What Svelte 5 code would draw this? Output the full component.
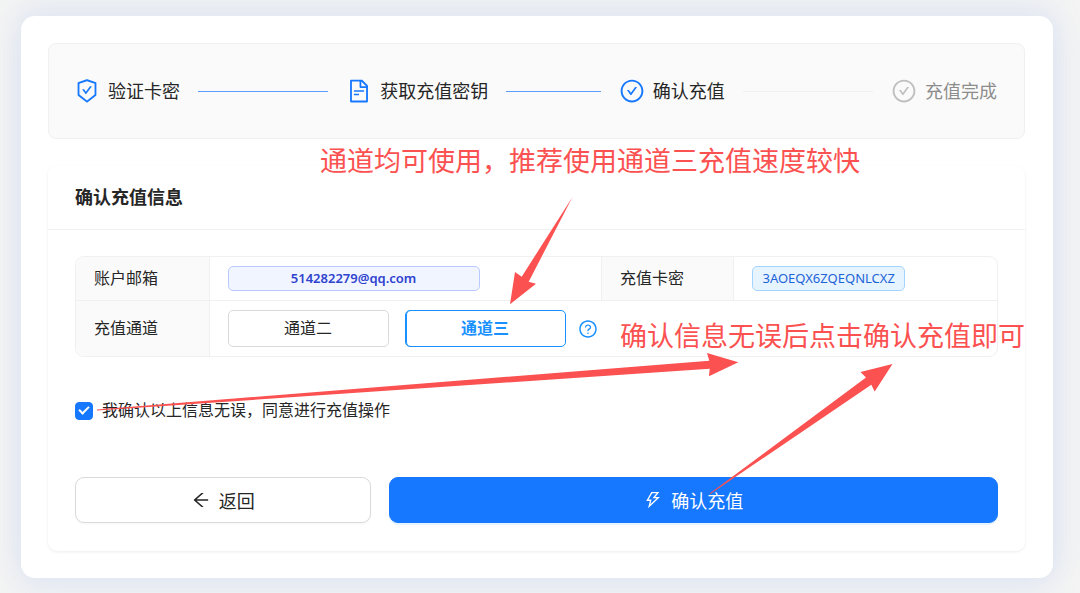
<script>
  // 步驟與圖示
  const icons = {
    shield: 'M866.9 169.9L527.1 54.1C523 52.7 517.5 52 512 52s-11 .7-15.1 2.1L157.1 169.9c-8.3 2.8-15.1 12.4-15.1 21.2v482.4c0 8.8 5.7 20.4 12.6 25.9L499.3 968c3.5 2.7 8 4.1 12.6 4.1s9.2-1.4 12.6-4.1l344.7-268.6c6.9-5.4 12.6-17 12.6-25.9V191.1c.2-8.8-6.6-18.3-14.9-21.2zM810 654.3L512 886.5 214 654.3V226.7l298-101.6 298 101.6v427.6zm-405.8-201c-3-4.1-7.8-6.6-13-6.6H336c-6.5 0-10.3 7.4-6.5 12.7l126.4 174a16.1 16.1 0 0026 0l212.6-292.7c3.8-5.3 0-12.7-6.5-12.7h-55.2c-5.1 0-10 2.5-13 6.6L468.9 542.4l-64.7-89.1z',
    file: 'M854.6 288.6L639.4 73.4c-6-6-14.1-9.4-22.6-9.4H192c-17.7 0-32 14.3-32 32v832c0 17.7 14.3 32 32 32h640c17.7 0 32-14.3 32-32V311.3c0-8.5-3.4-16.7-9.4-22.7zM790.2 326H602V137.8L790.2 326zm1.8 562H232V136h302v216a42 42 0 0042 42h216v494zM504 618H320c-4.4 0-8 3.6-8 8v48c0 4.4 3.6 8 8 8h184c4.4 0 8-3.6 8-8v-48c0-4.4-3.6-8-8-8zM312 490v48c0 4.4 3.6 8 8 8h384c4.4 0 8-3.6 8-8v-48c0-4.4-3.6-8-8-8H320c-4.4 0-8 3.6-8 8z',
    check: 'M699 353h-46.9c-10.2 0-19.9 4.9-25.9 13.3L469 584.3l-71.2-98.8c-6-8.3-15.6-13.3-25.9-13.3H325c-6.5 0-10.3 7.4-6.5 12.7l124.6 172.8a31.8 31.8 0 0051.7 0l210.6-292c3.9-5.3.1-12.7-6.4-12.7zM512 64C264.6 64 64 264.6 64 512s200.6 448 448 448 448-200.6 448-448S759.4 64 512 64zm0 820c-205.4 0-372-166.6-372-372s166.6-372 372-372 372 166.6 372 372-166.6 372-372 372z',
    question: 'M512 64C264.6 64 64 264.6 64 512s200.6 448 448 448 448-200.6 448-448S759.4 64 512 64zm0 820c-205.4 0-372-166.6-372-372s166.6-372 372-372 372 166.6 372 372-166.6 372-372 372zM623.6 316.7C593.6 290.4 554 276 512 276s-81.6 14.5-111.6 40.7C369.2 344 352 380.7 352 420v7.6c0 4.4 3.6 8 8 8h48c4.4 0 8-3.6 8-8V420c0-44.1 43.1-80 96-80s96 35.9 96 80c0 31.1-22 59.6-56.1 72.7-21.2 8.1-39.2 22.3-52.1 40.9-13.1 19-19.9 41.8-19.9 64.9V620c0 4.4 3.6 8 8 8h48c4.4 0 8-3.6 8-8v-22.7a48.3 48.3 0 0130.9-44.8c59-22.7 97.1-74.7 97.1-132.5.1-39.3-17.1-76-48.3-103.3zM472 732a40 40 0 1080 0 40 40 0 10-80 0z',
    back: 'M872 474H286.9l350.2-304c5.6-4.9 2.2-14-5.2-14h-88.5c-3.9 0-7.6 1.4-10.5 3.9L155 487.8a31.96 31.96 0 000 48.3L535.1 866c1.5 1.3 3.3 2 5.2 2h91.5c7.4 0 10.8-9.2 5.2-14L286.9 550H872c4.4 0 8-3.6 8-8v-60c0-4.4-3.6-8-8-8z',
    bolt: 'M848 359.3H627.7L825.8 109c4.1-5.3.4-13-6.3-13H436c-2.8 0-5.5 1.5-6.9 4L170 547.5c-3.1 5.3.7 12 6.9 12h174.4l-89.4 357.6c-1.9 7.8 7.5 13.3 13.3 7.7L853.5 373c5.2-4.9 1.7-13.7-5.5-13.7zM378.2 732.5l60.3-241H281.1l189.6-327.4h224.6L487 427.4h211L378.2 732.5z'
  };

  const steps = [
    { title: '验证卡密', icon: 'shield' },
    { title: '获取充值密钥', icon: 'file' },
    { title: '确认充值', icon: 'check' },
    { title: '充值完成', icon: 'check' }
  ];
  const channels = ['通道二', '通道三'];

  let current = 2;
  let channel = '通道三';
  let agreed = true;
</script>

<div class="page">
  <main class="panel">
    <ol class="steps">
      {#each steps as step, i}
        <li class="step" class:waiting={i > current}>
          <svg class="step-icon" viewBox="0 0 1024 1024" aria-hidden="true"><path d={icons[step.icon]} /></svg>
          <span>{step.title}</span>
          {#if i < steps.length - 1}
            <i class="line" class:done={i < current}></i>
          {/if}
        </li>
      {/each}
    </ol>

    <section class="card">
      <h2>确认充值信息</h2>
      <div class="card-body">
        <table>
          <colgroup>
            <col class="col-label" />
            <col class="col-email" />
            <col class="col-label" />
            <col />
          </colgroup>
          <tbody>
            <tr>
              <th scope="row">账户邮箱</th>
              <td><span class="tag email">514282279@qq.com</span></td>
              <th scope="row">充值卡密</th>
              <td><span class="tag">3AOEQX6ZQEQNLCXZ</span></td>
            </tr>
            <tr>
              <th scope="row">充值通道</th>
              <td colspan="3">
                <div class="channels">
                  {#each channels as name}
                    <button
                      type="button"
                      class="channel"
                      class:active={channel === name}
                      aria-pressed={channel === name}
                      on:click={() => (channel = name)}
                    >{name}</button>
                  {/each}
                  <svg class="help" viewBox="0 0 1024 1024" aria-hidden="true"><path d={icons.question} /></svg>
                </div>
              </td>
            </tr>
          </tbody>
        </table>

        <label class="agree">
          <input type="checkbox" bind:checked={agreed} />
          我确认以上信息无误，同意进行充值操作
        </label>

        <div class="actions">
          <button type="button" class="btn">
            <svg viewBox="0 0 1024 1024" aria-hidden="true"><path d={icons.back} /></svg>
            返回
          </button>
          <button type="button" class="btn primary" disabled={!agreed}>
            <svg viewBox="0 0 1024 1024" aria-hidden="true"><path d={icons.bolt} /></svg>
            确认充值
          </button>
        </div>
      </div>
    </section>
  </main>

  <!-- 標註說明 -->
  <p class="note note-channel">通道均可使用，推荐使用通道三充值速度较快</p>
  <p class="note note-confirm">确认信息无误后点击确认充值即可</p>
  <svg class="arrows" width="1080" height="593" viewBox="0 0 1080 593" aria-hidden="true">
    <path d="M572.5 197L521.7 276.7 515 272 510 304.3 536 283.7 528.7 281.7z" />
    <path d="M97 409.5L709.3 360.7 707 353 738.3 362.3 709 376.2 709.7 368.7 97 410.5z" />
    <path d="M709.7 493.5L866 377.5 860.5 372 892.5 364 874.7 391.5 871.3 384.7 710.3 494z" />
  </svg>
</div>

<style>
  :global(body) {
    margin: 0;
    background: #f4f4f4;
  }
  .page {
    position: relative;
    overflow: hidden;
    padding: 16px 27px 16px 21px;
    font-family: "Noto Sans", "Noto Sans CJK SC", sans-serif;
    font-size: 16px;
    color: #262626;
  }
  .panel {
    padding: 27px 28px 27px 27px;
    border-radius: 14px;
    background: #fff;
    box-shadow:
      0 -10px 28px 4px rgba(120, 160, 240, 0.1),
      0 10px 28px 4px rgba(120, 160, 240, 0.1);
  }
  svg {
    display: block;
    flex: none;
    fill: currentColor;
  }

  .steps {
    display: flex;
    margin: 0 0 27px;
    padding: 34px 27px 34px 25px;
    border: 1px solid #f0f0f0;
    border-radius: 8px;
    background: #fafafa;
    list-style: none;
    font-size: 18px;
    line-height: 26px;
  }
  .step {
    display: flex;
    flex: 1;
    align-items: center;
    gap: 8px;
    white-space: nowrap;
  }
  .step:last-child {
    flex: none;
  }
  .line {
    flex: 1;
    height: 1px;
    margin: 0 18px 0 10px;
    background: #f0f0f0;
  }
  .line.done {
    background: #5c9fff;
  }
  .step-icon {
    width: 26px;
    height: 26px;
    color: #1677ff;
  }
  .waiting {
    color: #8c8c8c;
  }
  .waiting .step-icon {
    color: #bfbfbf;
  }

  .card {
    border-radius: 9px;
    box-shadow: 0 1px 3px rgba(0, 0, 0, 0.08);
  }
  h2 {
    margin: 0;
    padding: 18px 27px;
    border-bottom: 1px solid #f0f0f0;
    font-size: 18px;
    font-weight: 700;
    line-height: 27px;
  }
  .card-body {
    padding: 26px 27px 28px;
  }

  table {
    width: 100%;
    table-layout: fixed;
    border: 1px solid #f0f0f0;
    border-radius: 9px;
    border-spacing: 0;
    overflow: hidden;
  }
  .col-label {
    width: 14.5%;
  }
  .col-email {
    width: 42.5%;
  }
  th,
  td {
    box-sizing: border-box;
    padding: 9px 18px;
    line-height: 25px;
    text-align: left;
  }
  th {
    border-right: 1px solid #f0f0f0;
    background: #fafafa;
    font-weight: 400;
  }
  td + th {
    border-left: 1px solid #f0f0f0;
  }
  tr:first-child > * {
    border-bottom: 1px solid #f0f0f0;
  }
  .tag {
    display: block;
    box-sizing: border-box;
    width: fit-content;
    padding: 0 9px;
    border: 1px solid #a3d3ff;
    border-radius: 5px;
    background: #e6f4ff;
    color: #1d63d8;
    font-size: 13px;
    line-height: 23px;
  }
  .email {
    width: 252px;
    border-color: #b9c8ff;
    background: #f0f5ff;
    color: #2f43cf;
    font-weight: 600;
    text-align: center;
  }
  .channels {
    display: flex;
    align-items: center;
    gap: 16px;
  }
  .channel {
    box-sizing: border-box;
    width: 161px;
    height: 37px;
    padding: 0;
    border: 1px solid #d9d9d9;
    border-radius: 5px;
    background: #fff;
    color: inherit;
    font: inherit;
  }
  .channel.active {
    border-color: #1890ff;
    box-shadow: inset 1px 0 #1890ff;
    color: #1890ff;
    font-weight: 700;
  }
  .help {
    width: 20px;
    height: 20px;
    margin-left: -4px;
    color: #1890ff;
  }

  .agree {
    display: flex;
    align-items: center;
    gap: 9px;
    width: fit-content;
    margin: 41px 0 54px;
    line-height: 25px;
  }
  .agree input {
    display: grid;
    place-items: center;
    appearance: none;
    width: 18px;
    height: 18px;
    margin: 0;
    border: 1px solid #d9d9d9;
    border-radius: 4px;
  }
  .agree input:checked {
    border-color: #1677ff;
    background: #1677ff;
  }
  .agree input:checked::after {
    content: '';
    width: 4px;
    height: 8px;
    margin-bottom: 3px;
    border: solid #fff;
    border-width: 0 2px 2px 0;
    transform: rotate(45deg);
  }

  .actions {
    display: grid;
    grid-template-columns: 33fr 68fr;
    gap: 18px;
  }
  .btn {
    display: flex;
    align-items: center;
    justify-content: center;
    gap: 8px;
    height: 46px;
    border: 1px solid #d9d9d9;
    border-radius: 9px;
    background: #fff;
    box-shadow: 0 2px 0 rgba(0, 0, 0, 0.02);
    color: inherit;
    font-family: inherit;
    font-size: 18px;
  }
  .btn svg {
    width: 20px;
    height: 20px;
  }
  .primary {
    border-color: #1677ff;
    background: #1677ff;
    box-shadow: 0 2px 0 rgba(5, 145, 255, 0.1);
    color: #fff;
  }

  .note {
    position: absolute;
    margin: 0;
    color: #fb5151;
    font-size: 27px;
    line-height: 36px;
    white-space: nowrap;
  }
  .note-channel {
    top: 143px;
    left: 320px;
  }
  .note-confirm {
    top: 318px;
    left: 620px;
  }
  .arrows {
    position: absolute;
    top: 0;
    left: 0;
    fill: #fb5151;
    pointer-events: none;
  }
</style>
